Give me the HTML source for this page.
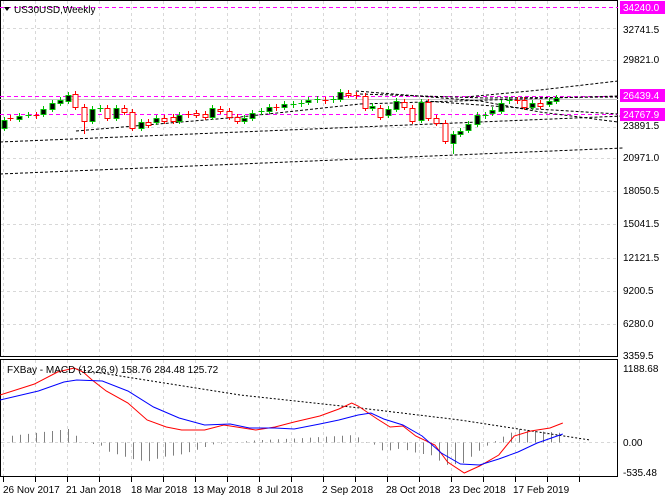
<!DOCTYPE html>
<html><head><meta charset="utf-8"><style>
html,body{margin:0;padding:0;background:#fff;}
body{width:665px;height:500px;overflow:hidden;position:relative;font-family:"Liberation Sans",sans-serif;font-size:10px;color:#000;}
svg{position:absolute;left:0;top:0;}
svg text{font-family:"Liberation Sans",sans-serif;font-size:10px;}
</style></head><body>
<svg id="s" width="665" height="500" viewBox="0 0 665 500">
<g id="grid" stroke="#d8d8d8" stroke-dasharray="3,3" stroke-width="1"></g>
<rect x="0.5" y="0.5" width="617" height="356" fill="none" stroke="#000"/>
<rect x="0.5" y="359.5" width="617" height="117" fill="none" stroke="#000"/>
<line x1="0" y1="7.5" x2="618" y2="7.5" stroke="#f0f" stroke-dasharray="4,3"/>
<line x1="0" y1="96.5" x2="618" y2="96.5" stroke="#f0f" stroke-dasharray="4,3"/>
<line x1="0" y1="114.5" x2="618" y2="114.5" stroke="#f0f" stroke-dasharray="4,3"/>
<line x1="0" y1="99.5" x2="618" y2="99.5" stroke="#c8c8c8"/>
<g id="trend" fill="none" stroke="#000" stroke-dasharray="3,2" stroke-width="1"></g>
<g id="candles"></g>
<g id="macd"></g>
<polygon points="4,7 10,7 7,11" fill="#000"/>
<text x="14" y="13">US30USD,Weekly</text>
<rect x="620" y="1" width="45" height="13" fill="#f0f"/>
<text x="623" y="11" fill="#fff">34240.0</text>
<text x="623" y="33">32741.5</text>
<text x="623" y="63">29821.0</text>
<rect x="620" y="89" width="45" height="13" fill="#f0f"/>
<text x="623" y="99" fill="#fff">26439.4</text>
<rect x="620" y="108" width="45" height="13" fill="#f0f"/>
<text x="623" y="118" fill="#fff">24767.9</text>
<text x="623" y="129">23891.5</text>
<text x="623" y="161">20971.0</text>
<text x="623" y="194">18050.5</text>
<text x="623" y="227">15041.5</text>
<text x="623" y="261">12121.5</text>
<text x="623" y="294">9200.5</text>
<text x="623" y="327">6280.0</text>
<text x="623" y="359">3359.5</text>
<text x="7" y="373">FXBay - MACD (12,26,9) 158.76 284.48 125.72</text>
<text x="623" y="372">1188.68</text>
<text x="623" y="446">0.00</text>
<text x="623" y="476">-535.48</text>
<g id="dates"></g>
<text x="3" y="493">26 Nov 2017</text>
<text x="66" y="493">21 Jan 2018</text>
<text x="131" y="493">18 Mar 2018</text>
<text x="193" y="493">13 May 2018</text>
<text x="257" y="493">8 Jul 2018</text>
<text x="322" y="493">2 Sep 2018</text>
<text x="386" y="493">28 Oct 2018</text>
<text x="449" y="493">23 Dec 2018</text>
<text x="513" y="493">17 Feb 2019</text>
</svg>
<script>
var NS="http://www.w3.org/2000/svg";
function el(p,t,a){var e=document.createElementNS(NS,t);for(var k in a)e.setAttribute(k,a[k]);p.appendChild(e);return e;}
var g=document.getElementById('grid');
[3,35,67,99,131,163,195,227,259,291,323,355,387,419,451,483,515,547,579].forEach(function(x){
 el(g,'line',{x1:x+.5,y1:1,x2:x+.5,y2:356});el(g,'line',{x1:x+.5,y1:360,x2:x+.5,y2:476});
 el(g,'line',{x1:x+.5,y1:477,x2:x+.5,y2:482,stroke:'#000','stroke-dasharray':'none'});});
[28,60,127,158,191,224,258,291,324].forEach(function(y){el(g,'line',{x1:1,y1:y+.5,x2:617,y2:y+.5});});
el(g,'line',{x1:1,y1:442.5,x2:617,y2:442.5});
var K=1.279;
var tr=document.getElementById('trend');
function pl(pts){el(tr,'polyline',{points:pts.map(function(p){return p[0]+','+p[1]}).join(' ')});}
pl([[0,142],[623,116]]);
pl([[76,131],[240,117],[360,104],[618,96]]);
pl([[0,174],[623,148]]);
pl([[360,94],[485,98],[618,97]]);
pl([[466,97],[540,90],[618,81]]);
pl([[356,91],[480,101],[540,112],[618,122]]);
pl([[426,101],[520,108],[618,114]]);
var C=[[3,120,128,'g'],[8,118,118,'r'],[15,116,119,'g'],[22,115,115,'g'],[28,115,116,'r'],[34,109,114,'g'],[41,103,109,'g'],[47,100,103,'g'],[53,95,101,'g'],[59,94,107,'r'],[66,107,121,'r'],[72,109,121,'g'],[78,108,109,'g'],[84,108,118,'r'],[91,108,118,'g'],[97,108,112,'r'],[103,112,128,'r'],[110,122,128,'g'],[116,122,125,'r'],[122,118,122,'g'],[128,118,121,'r'],[135,117,121,'r'],[140,115,121,'g'],[147,114,115,'r'],[153,113,115,'r'],[160,114,117,'r'],[166,108,117,'g'],[172,109,111,'r'],[179,111,117,'r'],[185,117,121,'r'],[191,118,121,'g'],[197,113,118,'g'],[204,111,112,'g'],[210,107,111,'g'],[216,107,108,'r'],[222,104,107,'g'],[229,104,105,'g'],[235,103,104,'g'],[241,100,102,'g'],[248,99,100,'g'],[254,100,101,'r'],[260,99,100,'g'],[266,92,99,'g'],[272,93,95,'r'],[278,95,96,'r'],[285,96,108,'r'],[291,106,108,'g'],[297,108,117,'r'],[303,109,115,'g'],[310,101,109,'g'],[316,102,107,'r'],[322,108,121,'r'],[329,102,120,'g'],[335,102,118,'r'],[341,118,123,'r'],[348,123,141,'r'],[354,134,143,'g'],[360,131,134,'g'],[366,124,130,'g'],[373,115,124,'g'],[379,115,116,'g'],[385,110,113,'g'],[392,103,111,'g'],[398,100,101,'g'],[404,100,101,'r'],[410,100,107,'r'],[416,103,107,'g'],[422,103,106,'r'],[429,101,104,'g'],[435,98,101,'g']];
var cg=document.getElementById('candles');
C.forEach(function(c){var x=Math.round(c[0]*K)+0.5;var col=c[3]=='g'?'#00c000':'#ff0000';
 var lo=c[2]+3+(c[0]==66?10:0)+(c[0]==354?8:0);
 el(cg,'line',{x1:x,y1:c[1]-3,x2:x,y2:lo,stroke:col});
 var h=Math.max(1,c[2]-c[1]);
 if(h<=1){el(cg,'line',{x1:x-3,y1:c[1]+.5,x2:x+3,y2:c[1]+.5,stroke:col});}
 else el(cg,'rect',{x:x-2.5,y:c[1]+.5,width:5,height:h,fill:c[3]=='g'?'#000':'#fff',stroke:col});});
var m=document.getElementById('macd');
var k2=665/1560;
var H=[[10,245],[160,222],[175,238],[195,263],[235,270],[255,290],[310,312],[345,320],[385,305],[420,300],[460,285],[500,268],[540,263],[600,256],[700,250],[830,240],[860,262],[880,270],[900,290],[940,280],[980,295],[1010,300],[1045,330],[1085,325],[1120,290],[1145,270],[1180,245],[1200,232],[1215,222],[1250,228],[1300,232],[1330,235]];
function interp(x){for(var i=0;i<H.length-1;i++){if(x>=H[i][0]&&x<=H[i+1][0]){var t=(x-H[i][0])/(H[i+1][0]-H[i][0]);return H[i][1]+t*(H[i+1][1]-H[i][1]);}}return 263;}
for(var i=0;i<70;i++){var x=Math.round(4+i*8.05);var zx=x/k2;var y=interp(zx)/3+355;
 el(m,'line',{x1:x+.5,y1:442.5,x2:x+.5,y2:y,stroke:'#808080'});}
el(m,'polyline',{points:'76,369 240,395 360,408 460,420 590,440',fill:'none',stroke:'#000','stroke-dasharray':'2,2'});
function ml(a,col){el(m,'polyline',{points:a.map(function(p){return (p[0]*K).toFixed(1)+','+p[1]}).join(' '),fill:'none',stroke:col});}
ml([[0,395],[27,384],[45,372],[58,368],[65,372],[72,380],[83,391],[100,403],[115,420],[130,427],[142,430],[160,430],[175,425],[185,427],[200,430],[215,427],[230,422],[250,416],[265,409],[275,403],[280,406],[295,419],[305,427],[315,426],[325,436],[340,445],[350,462],[363,473],[375,466],[390,455],[402,436],[415,431],[430,428],[440,423]],'#ff0000');
ml([[0,400],[30,391],[50,382],[60,380],[80,381],[100,391],[120,407],[140,418],[160,425],[180,424],[195,428],[215,428],[230,429],[250,424],[265,420],[280,415],[290,413],[300,419],[315,425],[330,436],[345,453],[360,464],[375,465],[390,459],[405,452],[420,443],[440,434]],'#0000ff');
</script>
</body></html>
